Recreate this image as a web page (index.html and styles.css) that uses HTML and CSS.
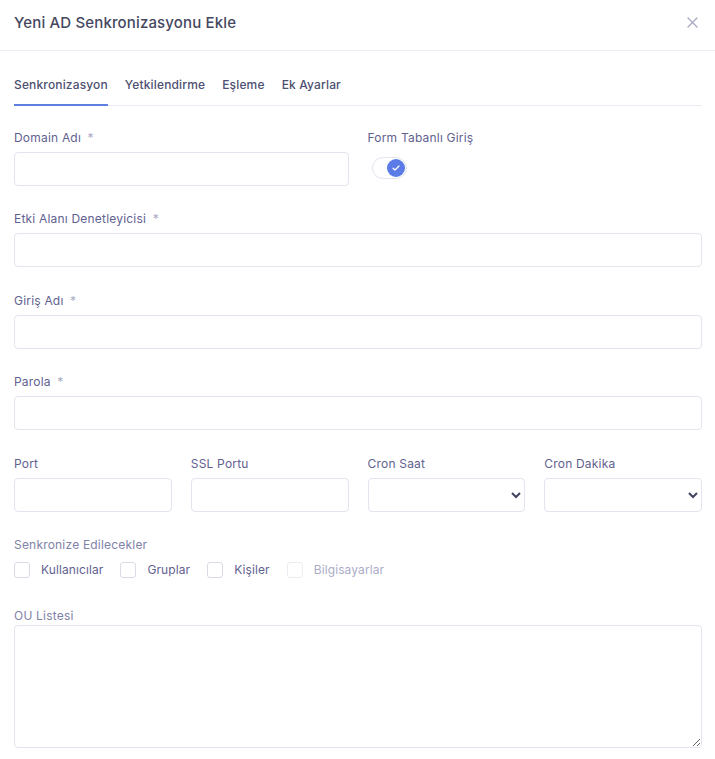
FILE: index.html
```html
<!DOCTYPE html>
<html lang="tr">
<head>
<meta charset="utf-8">
<title>Yeni AD Senkronizasyonu Ekle</title>
<link rel="stylesheet" href="styles.css">
</head>
<body>
<div class="modal">
  <div class="modal-header">
    <h5 class="modal-title">Yeni AD Senkronizasyonu Ekle</h5>
    <button class="btn-close" type="button" aria-label="Kapat">
      <svg width="11" height="11" viewBox="0 0 11 11"><path d="M1 1L10 10M10 1L1 10" stroke="#a9abc2" stroke-width="1.4" stroke-linecap="round"/></svg>
    </button>
  </div>
  <div class="modal-body">
    <ul class="nav-tabs">
      <li class="nav-link active">Senkronizasyon</li>
      <li class="nav-link">Yetkilendirme</li>
      <li class="nav-link">Eşleme</li>
      <li class="nav-link">Ek Ayarlar</li>
    </ul>

    <form class="form">
      <div class="row cols-2">
        <div class="field">
          <label class="form-label">Domain Adı <span class="req">*</span></label>
          <input class="form-control" type="text">
        </div>
        <div class="field">
          <label class="form-label">Form Tabanlı Giriş</label>
          <div class="switch">
            <span class="knob">
              <svg width="8" height="6" viewBox="0 0 8 6"><path d="M1 3.2L3 5L7 1" fill="none" stroke="#fff" stroke-width="1.2" stroke-linecap="round" stroke-linejoin="round"/></svg>
            </span>
          </div>
        </div>
      </div>

      <div class="field">
        <label class="form-label">Etki Alanı Denetleyicisi <span class="req">*</span></label>
        <input class="form-control" type="text">
      </div>

      <div class="field shift">
        <label class="form-label">Giriş Adı <span class="req">*</span></label>
        <input class="form-control" type="text">
      </div>

      <div class="field">
        <label class="form-label">Parola <span class="req">*</span></label>
        <input class="form-control" type="password">
      </div>

      <div class="row cols-4">
        <div class="field">
          <label class="form-label">Port</label>
          <input class="form-control" type="text">
        </div>
        <div class="field">
          <label class="form-label">SSL Portu</label>
          <input class="form-control" type="text">
        </div>
        <div class="field">
          <label class="form-label">Cron Saat</label>
          <select class="form-select"><option></option></select>
        </div>
        <div class="field">
          <label class="form-label">Cron Dakika</label>
          <select class="form-select"><option></option></select>
        </div>
      </div>

      <div class="field sync">
        <label class="form-label light">Senkronize Edilecekler</label>
        <div class="checks">
          <label class="check"><input type="checkbox"><span>Kullanıcılar</span></label>
          <label class="check"><input type="checkbox"><span>Gruplar</span></label>
          <label class="check"><input type="checkbox"><span>Kişiler</span></label>
          <label class="check disabled"><input type="checkbox" disabled><span>Bilgisayarlar</span></label>
        </div>
      </div>

      <div class="field ou">
        <label class="form-label light">OU Listesi</label>
        <textarea class="form-control textarea"></textarea>
      </div>
    </form>
  </div>
</div>
</body>
</html>
```

FILE: styles.css
```css
* {
  box-sizing: border-box;
}

html,
body {
  margin: 0;
  background: #ffffff;
}

body {
  font-family: "Inter", "Open Sans", sans-serif;
  font-size: 12px;
  color: #5f6290;
  letter-spacing: 0.2px;
}

.modal {
  width: 715px;
}

/* header */
.modal-header {
  height: 51px;
  padding: 0 14px;
  display: flex;
  align-items: center;
  justify-content: space-between;
  border-bottom: 1px solid #ebecf4;
}

.modal-title {
  margin: 0 0 5px;
  font-size: 15px;
  font-weight: 500;
  color: #45475f;
  letter-spacing: 0.15px;
}

.btn-close {
  border: 0;
  background: none;
  padding: 0;
  margin: 0 3px 5px 0;
  width: 11px;
  height: 11px;
  display: flex;
  cursor: pointer;
}

/* body */
.modal-body {
  padding: 0 13px 0 14px;
}

.nav-tabs {
  list-style: none;
  margin: 0;
  padding: 25px 0 0;
  display: flex;
  gap: 17px;
  border-bottom: 1px solid #ebecf4;
}

.nav-link {
  font-size: 12px;
  font-weight: 500;
  line-height: 18px;
  color: #4e5072;
  padding-bottom: 10px;
  border-bottom: 2px solid transparent;
  margin-bottom: -1px;
  letter-spacing: 0.15px;
}

.nav-link.active {
  border-bottom-color: #5f7fe0;
}

/* form */
.form {
  display: flex;
  flex-direction: column;
  gap: 22px;
  padding-top: 21px;
}

.row {
  display: grid;
  column-gap: 19px;
}

.cols-2 {
  grid-template-columns: 1fr 1fr;
}

.cols-4 {
  grid-template-columns: repeat(4, 1fr);
  margin-top: 1px;
}

.field {
  display: flex;
  flex-direction: column;
  min-width: 0;
}

.field.shift {
  margin-top: 1px;
}

.form-label {
  display: block;
  line-height: 18px;
  padding-top: 2px;
  margin-bottom: 5px;
  color: #5f6290;
  font-size: 12px;
}

.form-label.light {
  color: #7f82a8;
}

.req {
  color: #a8aac6;
  margin-left: 3px;
}

.form-control,
.form-select {
  height: 34px;
  width: 100%;
  border: 1px solid #e3e4ee;
  border-radius: 4px;
  background: #ffffff;
  font-family: inherit;
  font-size: 12px;
  color: #42445f;
  padding: 0 10px;
  outline: none;
}

.form-select {
  padding-right: 4px;
  color: #42445f;
}

/* switch */
.switch {
  margin: 5px 0 0 4px;
  width: 35px;
  height: 22px;
  border: 1px solid #e3e4ee;
  border-radius: 11px;
  background: #ffffff;
  display: flex;
  align-items: center;
  justify-content: flex-end;
  padding-right: 1px;
}

.knob {
  width: 18px;
  height: 18px;
  border-radius: 50%;
  background: #5b7be6;
  display: flex;
  align-items: center;
  justify-content: center;
}

/* checkboxes */
.sync .form-label {
  margin-bottom: 7px;
}

.checks {
  display: flex;
  align-items: center;
  gap: 17px;
  height: 18px;
}

.check {
  display: flex;
  align-items: center;
  gap: 11px;
  color: #5f6290;
  font-size: 12px;
  line-height: 18px;
  letter-spacing: 0.1px;
}

.check input {
  appearance: none;
  -webkit-appearance: none;
  margin: 0;
  width: 16px;
  height: 16px;
  border: 1px solid #d9dae6;
  border-radius: 3px;
  background: #ffffff;
}

.check.disabled {
  color: #abadc7;
}

.check.disabled input {
  border-color: #ececf3;
}

/* ou list */
.ou {
  margin-top: 4px;
}

.ou .form-label {
  margin-bottom: 0;
}

.textarea {
  height: 123px;
  padding: 8px 10px;
  resize: both;
}
```
